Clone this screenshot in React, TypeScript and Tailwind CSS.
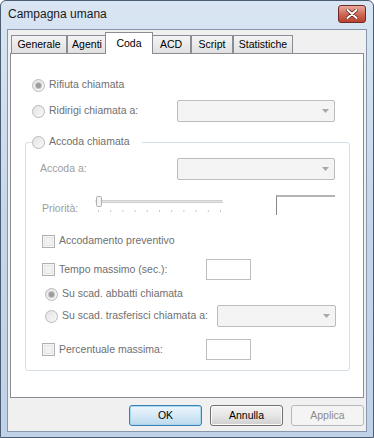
import React from "react";

const font = { fontFamily: '"Liberation Sans", Arial, sans-serif' };

function Radio({ checked }: { checked?: boolean }) {
  return (
    <div className="w-[13px] h-[13px] rounded-full border border-[#b9b9b9] bg-linear-to-br from-[#e4e4e4] to-[#f8f8f8] flex items-center justify-center shrink-0">
      {checked && <div className="w-[5px] h-[5px] rounded-full bg-[#9c9c9c] ring-1 ring-[#c4c4c4]" />}
    </div>
  );
}

function Check() {
  return (
    <div className="w-[13px] h-[13px] border border-[#b1b1b1] bg-[#f6f6f6] flex items-center justify-center shrink-0">
      <div className="w-[9px] h-[9px] border border-[#e6e6e6] bg-[#f1f1f1]" />
    </div>
  );
}

function Combo({ w }: { w: string }) {
  return (
    <div className={`${w} h-[22px] rounded-[2px] border border-[#bcbcbc] bg-[#f4f4f4] flex items-center justify-end pr-[5px]`}>
      <svg width="7" height="4" viewBox="0 0 7 4">
        <path d="M0 0 H7 L3.5 4 Z" fill="#a8a8a8" />
      </svg>
    </div>
  );
}

function Edit() {
  return <div className="w-[45px] h-[21px] border border-[#bdbdbd] bg-white" />;
}

const tabBase =
  "h-[18px] border border-b-0 border-[#898c95] bg-linear-to-b from-[#f4f4f4] to-[#e0e0e0] flex items-center justify-center text-[10.5px] text-black";

export default function App() {
  const ticks = Array.from({ length: 11 }, (_, i) => 3 + i * 12.2);
  return (
    <div
      style={font}
      className="w-[374px] h-[438px] flex flex-col border border-[#4b5d73] rounded-t-[6px] bg-linear-to-b from-[#d9e5f3] via-[#c6d6ea] to-[#c0d2e7] px-[6px] pb-[5px]"
    >
      {/* title bar */}
      <div className="h-[28px] flex items-start justify-between">
        <div className="pt-[6px] pl-[1px] text-[12px] text-[#1b1b1b] leading-[14px]">Campagna umana</div>
        <div className="mt-[4px] mr-[1px] w-[28px] h-[18px] rounded-[3px] border border-[#6e2a23] bg-linear-to-b from-[#e8a99c] via-[#cf6a58] to-[#b9402f] flex items-center justify-center">
          <svg width="12" height="10" viewBox="0 0 12 10">
            <path d="M1.5 1 L10.5 9 M10.5 1 L1.5 9" stroke="#5a1a12" strokeWidth="3.4" strokeLinecap="round" />
            <path d="M1.5 1 L10.5 9 M10.5 1 L1.5 9" stroke="#ffffff" strokeWidth="2" strokeLinecap="round" />
          </svg>
        </div>
      </div>

      {/* client area */}
      <div className="flex-1 border border-[#8797ab] bg-[#f0f0f0] flex flex-col">
        {/* tabs */}
        <div className="mt-[2px] ml-[3px] h-[21px] flex items-end">
          <div className={`${tabBase} w-[56px]`}>Generale</div>
          <div className={`${tabBase} w-[40px]`}>Agenti</div>
          <div className="relative z-10 -mx-[2px] -mb-px w-[48px] h-[22px] border border-b-0 border-[#898c95] bg-white flex items-start justify-center pt-[3px] text-[10.5px] text-black">
            Coda
          </div>
          <div className={`${tabBase} w-[40px]`}>ACD</div>
          <div className={`${tabBase} w-[42px]`}>Script</div>
          <div className={`${tabBase} w-[60px]`}>Statistiche</div>
        </div>

        {/* panel */}
        <div className="mx-[2px] h-[345px] border border-[#898c95] bg-white flex flex-col text-[10.5px]">
          {/* Rifiuta */}
          <div className="mt-[20px] h-[22px] pl-[21px] flex items-center gap-[4px] text-[#6f6f6f]">
            <Radio checked />
            <span>Rifiuta chiamata</span>
          </div>
          {/* Ridirigi */}
          <div className="mt-[4px] h-[22px] pl-[21px] flex items-center text-[#6f6f6f]">
            <div className="w-[145px] flex items-center gap-[4px]">
              <Radio />
              <span>Ridirigi chiamata a:</span>
            </div>
            <Combo w="w-[158px]" />
          </div>

          {/* group box */}
          <div className="mt-[20px] ml-[14px] w-[325px] h-[229px] border border-[#d5dfe5] rounded-[3px] flex flex-col">
            <div className="-mt-[8px] ml-[6px] w-[110px] h-[14px] bg-white flex items-center gap-[4px] text-[#6f6f6f]">
              <Radio />
              <span>Accoda chiamata</span>
            </div>
            {/* Accoda a */}
            <div className="mt-[9px] h-[22px] pl-[14px] flex items-center">
              <div className="w-[137px] text-[#9d9d9d]">Accoda a:</div>
              <Combo w="w-[158px]" />
            </div>
            {/* Priorità */}
            <div className="mt-[15px] h-[20px] pl-[16px] flex items-start">
              <div className="w-[53px] pt-[7px] leading-[12px] text-[#9d9d9d]">Priorità:</div>
              <svg width="129" height="20" viewBox="0 0 129 20" className="shrink-0">
                <rect x="1" y="5.5" width="126" height="2" fill="#e4e4e4" stroke="#cfcfcf" strokeWidth="1" />
                <rect x="1.5" y="1.5" width="5" height="10" rx="1" fill="#f3f3f3" stroke="#b0b0b0" />
                {ticks.map((t, i) => (
                  <line key={i} x1={t + 0.5} x2={t + 0.5} y1="15" y2="17" stroke="#c9c9c9" strokeWidth="1" />
                ))}
              </svg>
              <div className="ml-[52px] w-[59px] h-[20px] border-t-2 border-l border-t-[#b4b4b4] border-l-[#8a8a8a]" />
            </div>
            {/* Accodamento */}
            <div className="mt-[15px] h-[22px] pl-[16px] flex items-center gap-[4px] text-[#6f6f6f]">
              <Check />
              <span>Accodamento preventivo</span>
            </div>
            {/* Tempo */}
            <div className="mt-[7px] h-[21px] pl-[16px] flex items-center text-[#6f6f6f]">
              <div className="w-[164px] flex items-center gap-[4px]">
                <Check />
                <span>Tempo massimo (sec.):</span>
              </div>
              <Edit />
            </div>
            {/* Su scad abbatti */}
            <div className="mt-[3px] h-[22px] pl-[19px] flex items-center gap-[4px] text-[#6f6f6f]">
              <Radio checked />
              <span>Su scad. abbatti chiamata</span>
            </div>
            {/* Su scad trasferisci */}
            <div className="h-[22px] pl-[19px] flex items-center text-[#6f6f6f]">
              <div className="w-[172px] flex items-center gap-[4px]">
                <Radio />
                <span>Su scad. trasferisci chiamata a:</span>
              </div>
              <Combo w="w-[119px]" />
            </div>
            {/* Percentuale */}
            <div className="mt-[12px] h-[21px] pl-[16px] flex items-center text-[#6f6f6f]">
              <div className="w-[164px] flex items-center gap-[4px]">
                <Check />
                <span>Percentuale massima:</span>
              </div>
              <Edit />
            </div>
          </div>
        </div>

        {/* buttons */}
        <div className="mt-[7px] mx-[2px] flex justify-end gap-[8px] text-[10.5px]">
          <div className="w-[73px] h-[21px] rounded-[3px] border border-[#3c7fb1] bg-linear-to-b from-[#eef6fc] via-[#d6e9f6] to-[#bcd9ec] shadow-[inset_0_0_0_1px_#a8d5f0] flex items-center justify-center text-black">
            OK
          </div>
          <div className="w-[73px] h-[21px] rounded-[3px] border border-[#707070] bg-linear-to-b from-[#f3f3f3] via-[#e6e6e6] to-[#cfcfcf] shadow-[inset_0_0_0_1px_#fbfbfb] flex items-center justify-center text-black">
            Annulla
          </div>
          <div className="w-[73px] h-[21px] rounded-[3px] border border-[#b6b9bc] bg-[#f4f4f4] flex items-center justify-center text-[#8a8a8a]">
            Applica
          </div>
        </div>
      </div>
    </div>
  );
}
